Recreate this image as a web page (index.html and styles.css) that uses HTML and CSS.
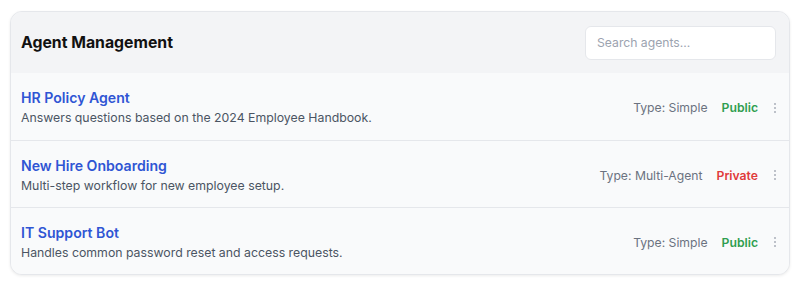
FILE: index.html
```html
<!DOCTYPE html>
<html lang="en">
<head>
<meta charset="utf-8">
<title>Agent Management</title>
<link rel="stylesheet" href="styles.css">
</head>
<body>
<div class="card">
  <div class="header">
    <h2 class="title">Agent Management</h2>
    <input class="search" type="text" placeholder="Search agents...">
  </div>
  <ul class="list">
    <li class="row">
      <div class="info">
        <div class="name">HR Policy Agent</div>
        <div class="desc">Answers questions based on the 2024 Employee Handbook.</div>
      </div>
      <div class="meta">
        <span class="type">Type: Simple</span>
        <span class="vis public">Public</span>
        <span class="kebab"><i></i><i></i><i></i></span>
      </div>
    </li>
    <li class="row">
      <div class="info">
        <div class="name">New Hire Onboarding</div>
        <div class="desc">Multi-step workflow for new employee setup.</div>
      </div>
      <div class="meta">
        <span class="type">Type: Multi-Agent</span>
        <span class="vis private">Private</span>
        <span class="kebab"><i></i><i></i><i></i></span>
      </div>
    </li>
    <li class="row">
      <div class="info">
        <div class="name">IT Support Bot</div>
        <div class="desc">Handles common password reset and access requests.</div>
      </div>
      <div class="meta">
        <span class="type">Type: Simple</span>
        <span class="vis public">Public</span>
        <span class="kebab"><i></i><i></i><i></i></span>
      </div>
    </li>
  </ul>
</div>
</body>
</html>
```
FILE: styles.css
```css
* { box-sizing: border-box; }
html, body { margin: 0; padding: 0; background: #ffffff; }
body {
  padding: 11px 10px;
  font-family: Inter, "Noto Sans", sans-serif;
  color: #111827;
}
.card {
  width: 780px;
  border: 1px solid #e5e7eb;
  border-radius: 12px;
  overflow: hidden;
  background: #f9fafb;
  box-shadow: 0 1px 3px rgba(0,0,0,0.08);
}
.header {
  display: flex;
  align-items: center;
  justify-content: space-between;
  height: 61px;
  padding: 0 13px 0 10px;
  background: #f3f4f6;
}
.title {
  margin: 0;
  font-size: 15.8px;
  font-weight: 700;
  color: #111111;
}
.search {
  width: 191px;
  height: 34px;
  padding: 0 11px;
  border: 1px solid #e5e7eb;
  border-radius: 6px;
  background: #ffffff;
  font-family: Inter, "Noto Sans", sans-serif;
  font-size: 12.2px;
  color: #374151;
  outline: none;
}
.search::placeholder { color: #9ca3af; }
.list { list-style: none; margin: 0; padding: 0; }
.row {
  display: flex;
  align-items: center;
  justify-content: space-between;
  height: 67px;
  padding: 2px 12px 0 10px;
  border-top: 1px solid #e5e7eb;
  background: #f9fafb;
}
.row:first-child { border-top: none; height: 67px; }
.name {
  font-size: 14.1px;
  font-weight: 600;
  color: #2f55d4;
  line-height: 20px;
}
.desc {
  font-size: 12.3px;
  color: #4b5563;
  line-height: 18px;
  margin-top: 1px;
}
.meta {
  display: flex;
  align-items: center;
  gap: 14px;
  font-size: 12.2px;
}
.type { color: #6b7280; }
.vis { font-weight: 600; }
.public { color: #2f9e4f; }
.private { color: #e03b3b; }
.kebab {
  display: flex;
  flex-direction: column;
  gap: 2px;
  margin-left: 1px;
  padding: 0 1px;
}
.kebab i {
  display: block;
  width: 2px;
  height: 2px;
  border-radius: 1px;
  background: #a8aeb8;
}
```
